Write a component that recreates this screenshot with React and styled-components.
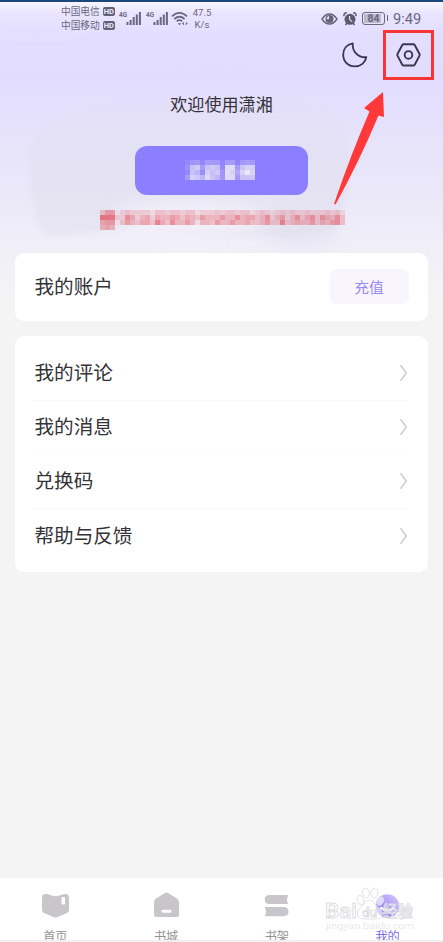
import React from 'react';
import styled, { createGlobalStyle } from 'styled-components';

const Global = createGlobalStyle`
  * { box-sizing: border-box; }
  body { margin: 0; background: #f4f4f4; font-family: Roboto, "Noto Sans CJK SC", sans-serif; }
  svg { display: block; flex: none; }
`;

const Screen = styled.div`
  position: relative;
  width: 443px;
  height: 942px;
  overflow: hidden;
  display: flex;
  flex-direction: column;
  border-top: 2px solid #194879;
  border-bottom: 2px solid #f1f1f1;
  color: #333338;
  background: linear-gradient(180deg, #f7f5ff 0, #e9e4fe 12px, #e3deff 32px, #e2ddff 78px, #e6e2fb 130px, #eae8f8 190px, #f0eef8 240px, #f4f4f4 304px);
`;

const Backdrop = styled.svg`
  position: absolute;
  left: 0;
  top: 0;
`;

const StatusBar = styled.header`
  position: relative;
  height: 32px;
  display: flex;
  align-items: center;
  padding: 1px 20px 0 61px;
  color: #6a6780;
`;

const Carriers = styled.div`
  display: grid;
  width: 56px;
`;

const Carrier = styled.div`
  display: flex;
  align-items: center;
  gap: 3px;
  height: 14px;
  font-size: 9.7px;
  line-height: 14px;
  white-space: nowrap;
`;

const HdTag = styled.span`
  width: 12px;
  height: 9px;
  border-radius: 2px;
  background: #625f76;
  color: #eeeaff;
  font-size: 7.5px;
  font-weight: 700;
  line-height: 9px;
  text-align: center;
`;

const Speed = styled.div`
  margin-left: 3px;
  width: 22px;
  font-size: 9.5px;
  line-height: 11.5px;
  text-align: center;
`;

const StatusRight = styled.div`
  margin-left: auto;
  display: flex;
  align-items: center;
`;

const AlarmSlot = styled.span`
  margin-left: 5px;
`;

const Battery = styled.div`
  position: relative;
  width: 23px;
  height: 13px;
  margin: 0 8px 0 5px;
  border: 1.4px solid #6a6780;
  border-radius: 3px;
  display: flex;
  align-items: center;
  justify-content: center;
  font-size: 10.5px;
  font-weight: 700;
  background: linear-gradient(90deg, #bdb9cf 84%, #e7e2fc 84%);
  box-shadow: inset 0 0 0 1px #e7e2fc;

  &::after {
    content: '';
    position: absolute;
    right: -4px;
    top: 2px;
    width: 1.5px;
    height: 6px;
    background: #6a6780;
  }
`;

const Clock = styled.span`
  font-size: 14.6px;
  line-height: 16px;
  width: 30px;
  white-space: nowrap;
`;

const Toolbar = styled.div`
  position: relative;
  height: 42px;
  padding: 0 22.5px 0 0;
  display: flex;
  align-items: center;
  justify-content: flex-end;
  gap: 28px;
`;

const Welcome = styled.section`
  position: relative;
  height: 176.5px;
  padding-top: 17px;
  display: flex;
  flex-direction: column;
  align-items: center;
`;

const Greeting = styled.h1`
  margin: 0;
  font-size: 17.1px;
  font-weight: 400;
  line-height: 25px;
`;

const LoginButton = styled.button`
  width: 173px;
  height: 49px;
  margin: 28px 0 0;
  border: 0;
  border-radius: 12px;
  background: #8b7eff;
  display: flex;
  justify-content: center;
  padding: 14px 3px 0 0;
`;

const Notice = styled.div`
  margin-top: 15px;
  padding-left: 2px;
`;

const Card = styled.section`
  position: relative;
  margin: 0 15px 15px;
  border-radius: 9px;
  background: #fff;
  padding: ${(p) => p.$pad};
`;

const AccountRow = styled.div`
  height: 68.5px;
  display: flex;
  align-items: center;
  justify-content: space-between;
`;

const Label = styled.span`
  font-size: 19.6px;
  line-height: 28px;
  padding-top: ${(p) => p.$drop}px;
`;

const Recharge = styled.button`
  width: 79px;
  height: 35px;
  border: 0;
  border-radius: 7px;
  background: #f9f5ff;
  color: #9788f0;
  font: inherit;
  font-size: 14.8px;
  padding: 0;
`;

const MenuRow = styled.div`
  height: 54.2px;
  margin-left: -2px;
  padding: 0 1px 0 2px;
  display: flex;
  align-items: center;
  justify-content: space-between;
  border-bottom: 1px solid ${(p) => (p.$last ? 'transparent' : '#f9f9f9')};
`;

const Nav = styled.nav`
  margin-top: auto;
  height: 62px;
  flex: none;
  overflow: hidden;
  background: #fff;
  display: grid;
  grid-template-columns: repeat(4, 1fr);
`;

const Tab = styled.div`
  display: flex;
  flex-direction: column;
  align-items: center;
  gap: 8px;
  padding-top: 13px;
  font-size: 12.2px;
  line-height: 18px;
  color: ${(p) => (p.$active ? '#806ee8' : '#929292')};
`;

const Overlay = styled.svg`
  position: absolute;
  left: ${(p) => p.$x}px;
  top: ${(p) => p.$y}px;
  pointer-events: none;
`;

const Signal = () => (
  <svg width="27" height="20" viewBox="0 0 27 20" fill="#6a6780">
    <text x="2" y="8" fontFamily="Roboto" fontSize="8" fontWeight="700" textLength="8" lengthAdjust="spacingAndGlyphs">4G</text>
    {[3, 5, 8, 10.5, 13].map((h, i) => (
      <rect key={h} x={9.5 + i * 3.1} y={16 - h} width="2" height={h} />
    ))}
  </svg>
);

const Wifi = () => (
  <svg width="17" height="16" viewBox="0 0 17 16" fill="none" stroke="#6a6780" strokeWidth="1.7">
    <path d="M1 5.4Q8.5-1.6 16 5.4M3.4 8Q8.5 3.5 13.6 8M5.7 10.4Q8.5 8 11.2 10.4" />
    <path d="M6.7 12.2h3.6l-1.8 2Z" fill="#6a6780" stroke="none" />
    <path d="M11 12.6l2-1.7v3.4ZM16.8 12.6l-2-1.7v3.4Z" fill="#6a6780" stroke="none" />
  </svg>
);

const Eye = () => (
  <svg width="17" height="12" viewBox="0 0 17 12" fill="none" stroke="#65627a" strokeWidth="1.4">
    <path d="M1 6Q4.3 1 8.5 1T16 6Q12.7 11 8.5 11T1 6Z" />
    <circle cx="8.5" cy="6" r="4" fill="#65627a" stroke="none" />
    <path d="M8 2.8A3.2 3.2 0 0 0 5.8 6.2H8Z" fill="#e7e2fc" stroke="none" />
  </svg>
);

const Alarm = () => (
  <svg width="14" height="14" viewBox="0 0 14 14" fill="#5b5870">
    <circle cx="7" cy="7.3" r="5.5" />
    <path d="M1 4.2Q.5 1 3.8.8M10.2.8Q13.5 1 13 4.2M2.4 12.9l1.8-1.8M11.6 12.9l-1.8-1.8" fill="none" stroke="#5b5870" strokeWidth="1.5" />
    <path d="M6.6 4v3.600l2.500 2" fill="none" stroke="#eeeaff" strokeWidth="1.100" />
  </svg>
);

const Moon = () => (
  <svg width="26" height="26" viewBox="0 0 26 26" fill="none" stroke="#38354c" strokeWidth="1.8" strokeLinejoin="round">
    <path d="M10.8 1.3C4.600 2.500 1.200 7.200 1.200 12.700C1.200 19.500 6.200 24.400 12.800 24.400C18.800 24.400 23.500 20.800 24.300 15.200C16.500 16 9.800 9.300 10.800 1.300Z" />
  </svg>
);

const Settings = () => (
  <svg width="25" height="24" viewBox="0 0 25 24" fill="none" stroke="#38354c" strokeWidth="1.9" strokeLinejoin="round">
    <path d="M7.7 1.2h9.6q.9 0 1.4.8l4.7 8.7q.6 1.1 0 2.2L18.7 21.7q-.5.8-1.4.8H7.7q-.9 0-1.4-.8L1.6 12.900q-.6-1.100 0-2.200L6.300 2q.5-.8 1.400-.8Z" />
    <circle cx="12.5" cy="11.9" r="3.8" />
  </svg>
);

const Chevron = () => (
  <svg width="9" height="18" viewBox="0 0 9 18" fill="none" stroke="#cccccc" strokeWidth="1.5">
    <path d="M1.5 1.2L7.3 9L1.5 16.8" />
  </svg>
);

const loginPixels = [
  ['#9487fc', '#a094fa', '#a498fb', '#9184fd', '#a69bf9', '#a69af9', '#a398fb', '#9185fe', '#a69bfa', '#a79cf9', '#9083fd', '#a498fb', '#a79cfa', '#a499fa'],
  ['#9c90fb', '#c8c0f5', '#d2ccf8', '#a79cfa', '#c8c0f7', '#d1caf7', '#c7bff8', '#9689fc', '#dfdbfa', '#dfdbf9', '#a79bf9', '#cac2f8', '#d7d0f7', '#d5cef7'],
  ['#9387fc', '#c8c0f9', '#bcb3f8', '#9a8efb', '#d6d0f7', '#c8bff9', '#d0c8f7', '#a195fb', '#e2def8', '#d5d1f4', '#b1a7fa', '#d8d1f8', '#e9e6f8', '#d8d2f7'],
  ['#a69af9', '#d6d1f8', '#cfc7f8', '#beb4f8', '#ded9f7', '#cbc3f8', '#bfb5fa', '#a197fb', '#dfdaf9', '#ded9fa', '#a397fa', '#c8c0f8', '#cac1f7', '#cdc5f8'],
];

const noticePixels = [
  [3, 6, 6, 0, 2, 3, 2, 2, 2, 2, 1, 3, 3, 2, 3, 3, 2, 3, 3, 1, 2, 2, 2, 3, 2, 3, 3, 2, 3, 3, 1, 2, 3, 2, 1, 2, 3, 2, 3, 2, 2, 3, 2, 2, 2, 3, 2, 3, 1],
  [9, 9, 9, 2, 2, 7, 5, 2, 4, 5, 2, 5, 4, 4, 6, 5, 3, 5, 4, 3, 6, 4, 4, 4, 6, 4, 4, 7, 4, 5, 5, 3, 4, 7, 2, 4, 6, 2, 4, 7, 3, 5, 7, 3, 7, 5, 4, 7, 3],
  [5, 6, 6, 0, 3, 6, 4, 3, 5, 5, 3, 8, 5, 3, 7, 4, 4, 6, 4, 1, 4, 4, 3, 6, 4, 4, 6, 4, 4, 5, 3, 3, 4, 6, 3, 3, 8, 3, 4, 5, 4, 4, 6, 3, 5, 4, 6, 7, 3],
  [4, 5, 4],
];

const LoginMosaic = () => (
  <svg width="70" height="20" shapeRendering="crispEdges">
    {loginPixels.flatMap((row, y) => row.map((color, x) => (
      <rect key={`${x}-${y}`} x={x * 5} y={y * 5} width="5" height="5" fill={color} />
    )))}
  </svg>
);

const NoticeMosaic = () => (
  <svg width="245" height="20" shapeRendering="crispEdges">
    {noticePixels.flatMap((row, y) => row.map((v, x) => (
      <rect key={`${x}-${y}`} x={x * 5} y={y * 5} width="5" height="5" fill="#e3606c" opacity={0.07 + v * 0.086} />
    )))}
  </svg>
);

const HomeIcon = () => (
  <svg width="29" height="29" viewBox="0 0 29 29" fill="#c8c6ca">
    <path d="M3.500 3Q6 2.600 10 4.200Q14.500 6.500 19 4.200Q23 2.600 25.500 3Q28 3.400 28 6v13q0 2-2 3L16 26.300q-1.500.7-3 0L3 22q-2-1-2-3V6q0-2.600 2.500-3Z" />
    <rect x="20.500" y="6" width="3.500" height="7.500" rx="1" fill="#fff" />
  </svg>
);

const StoreIcon = () => (
  <svg width="27" height="29" viewBox="0 0 27 29" fill="#c8c6ca">
    <path d="M11.500 2.200q2-1.400 4 0l8.700 5.500q1.800 1.200 1.800 3.300v12.500q0 2.500-2.500 2.500h-20Q1 26 1 23.500V11q0-2.100 1.800-3.300Z" />
    <rect x="8.500" y="18.700" width="10" height="3" rx="1" fill="#fff" />
  </svg>
);

const ShelfIcon = () => (
  <svg width="25" height="29" viewBox="0 0 25 29" fill="#c8c6ca">
    <path d="M5.500 4h18q1 .3.300 1.200-1.600 3.300 0 6.500.7 1-.3 1.300h-18Q.7 13 .7 8.500T5.500 4Z" />
    <path d="M1.500 16h18q5 0 5 4.600t-5 4.700h-18q-1-.2-.3-1.200 1.500-3.500 0-7-.7-.9.300-1.100Z" />
  </svg>
);

const MineIcon = () => (
  <svg width="25" height="29" viewBox="0 0 25 29">
    <defs>
      <linearGradient id="mine" x1="0" y1="1" x2="1" y2="0">
        <stop stopColor="#7262ee" /><stop offset=".5" stopColor="#ad9df6" /><stop offset="1" stopColor="#d7cfff" />
      </linearGradient>
    </defs>
    <circle cx="12.5" cy="15" r="11.8" fill="url(#mine)" />
    <path d="M6 17q6.500 5 13 0" fill="none" stroke="#fff" strokeWidth="2.3" strokeLinecap="round" />
  </svg>
);

const Watermark = () => (
  <Overlay $x={320} $y={881} width="100" height="50" fill="#fff" fillOpacity=".65" stroke="#dcdbdf" strokeWidth=".8" fontFamily='Roboto, "Noto Sans CJK SC", sans-serif' fontWeight="500">
    <ellipse cx="40.5" cy="17" rx="3.2" ry="4.6" transform="rotate(-20 40.5 17)" />
    <ellipse cx="46" cy="10" rx="3.4" ry="4.8" transform="rotate(-8 46 10)" />
    <ellipse cx="54.5" cy="10" rx="3.4" ry="4.8" transform="rotate(12 54.5 10)" />
    <ellipse cx="60" cy="18" rx="3.3" ry="4.6" transform="rotate(25 60 18)" />
    <path d="M43 22Q49 12 56 22L61 27Q65 36 56 36H44Q35 36 38 27Z" />
    <text x="5" y="34.5" fontSize="20" textLength="32" lengthAdjust="spacingAndGlyphs">Bai</text>
    <text x="42" y="33.5" fontSize="13" textLength="15" lengthAdjust="spacingAndGlyphs">du</text>
    <text x="62" y="34" fontSize="16" textLength="31" lengthAdjust="spacingAndGlyphs">经验</text>
    <text x="6" y="45.5" fontSize="9.5" fontWeight="400" fill="#dddce0" stroke="none" textLength="88" lengthAdjust="spacingAndGlyphs">jingyan.baidu.com</text>
  </Overlay>
);

const tabs = [
  ['首页', HomeIcon],
  ['书城', StoreIcon],
  ['书架', ShelfIcon],
  ['我的', MineIcon],
];

const menu = ['我的评论', '我的消息', '兑换码', '帮助与反馈'];

export default function App() {
  return (
    <>
      <Global />
      <Screen>
        <Backdrop width="443" height="255" viewBox="0 0 443 255">
          <defs>
            <linearGradient id="shape" x1="0" y1="0" x2="0" y2="1">
              <stop stopColor="#e2dff0" stopOpacity="0" /><stop offset=".5" stopColor="#e0deee" stopOpacity=".5" /><stop offset="1" stopColor="#e3e1ee" stopOpacity=".65" />
            </linearGradient>
            <filter id="soft" x="-30%" y="-80%" width="160%" height="260%"><feGaussianBlur stdDeviation="9" /></filter>
            <filter id="edge" x="-10%" y="-10%" width="120%" height="120%"><feGaussianBlur stdDeviation="2.5" /></filter>
          </defs>
          <path d="M28 148Q70 72 230 70Q322 73 347 140Q356 185 334 229Q235 244 140 226L50 234Q31 230 28 148Z" fill="url(#shape)" filter="url(#edge)" />
          <ellipse cx="190" cy="217" rx="75" ry="18" fill="#f4f3fb" opacity=".85" filter="url(#soft)" />
          <ellipse cx="302" cy="234" rx="38" ry="8" fill="#dedbeb" opacity=".6" filter="url(#soft)" />
          <path d="M0 31Q45 47 93 26" fill="none" stroke="#eee9ff" strokeWidth="2" opacity=".5" filter="url(#edge)" />
        </Backdrop>
        <StatusBar>
          <Carriers>
            <Carrier>中国电信<HdTag>HD</HdTag></Carrier>
            <Carrier>中国移动<HdTag>HD</HdTag></Carrier>
          </Carriers>
          <Signal /><Signal />
          <Wifi />
          <Speed>47.5<br />K/s</Speed>
          <StatusRight>
            <Eye />
            <AlarmSlot><Alarm /></AlarmSlot>
            <Battery>84</Battery>
            <Clock>9:49</Clock>
          </StatusRight>
        </StatusBar>
        <Toolbar><Moon /><Settings /></Toolbar>
        <Welcome>
          <Greeting>欢迎使用潇湘</Greeting>
          <LoginButton><LoginMosaic /></LoginButton>
          <Notice><NoticeMosaic /></Notice>
        </Welcome>
        <Card $pad="0 19.5px">
          <AccountRow><Label $drop={3}>我的账户</Label><Recharge>充值</Recharge></AccountRow>
        </Card>
        <Card $pad="10.5px 19.5px 8.5px">
          {menu.map((name, i) => (
            <MenuRow key={name} $last={i === menu.length - 1}><Label $drop={2}>{name}</Label><Chevron /></MenuRow>
          ))}
        </Card>
        <Nav>
          {tabs.map(([name, Icon]) => (
            <Tab key={name} $active={name === '我的'}><Icon />{name}</Tab>
          ))}
        </Nav>
        <Watermark />
        <Overlay $x={330} $y={26} width="108" height="180" viewBox="330 28 108 180">
          <rect x="384.5" y="31.5" width="48" height="47" fill="none" stroke="#fb3535" strokeWidth="3" />
          <path d="M383 92L384 117L378.500 115.500Q359 162 335.500 204.500L334 204Q351 154 369.500 111.500L364 108Z" fill="#ff3939" />
        </Overlay>
      </Screen>
    </>
  );
}
